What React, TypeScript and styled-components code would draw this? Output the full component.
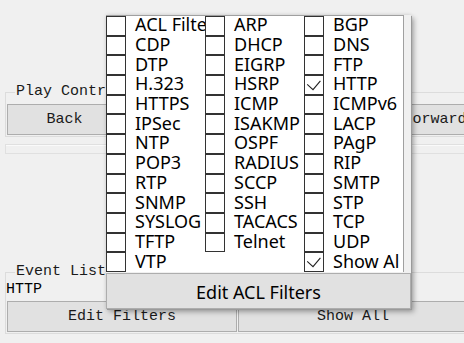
import React from "react";
import styled, { createGlobalStyle } from "styled-components";

const GlobalStyle = createGlobalStyle`
  html, body {
    margin: 0;
    padding: 0;
    background: #f0f0f0;
    overflow: hidden;
  }
  body {
    width: 464px;
    height: 343px;
  }
`;

const columns: { name: string; checked?: boolean }[][] = [
  [
    { name: "ACL Filter" },
    { name: "CDP" },
    { name: "DTP" },
    { name: "H.323" },
    { name: "HTTPS" },
    { name: "IPSec" },
    { name: "NTP" },
    { name: "POP3" },
    { name: "RTP" },
    { name: "SNMP" },
    { name: "SYSLOG" },
    { name: "TFTP" },
    { name: "VTP" },
  ],
  [
    { name: "ARP" },
    { name: "DHCP" },
    { name: "EIGRP" },
    { name: "HSRP" },
    { name: "ICMP" },
    { name: "ISAKMP" },
    { name: "OSPF" },
    { name: "RADIUS" },
    { name: "SCCP" },
    { name: "SSH" },
    { name: "TACACS" },
    { name: "Telnet" },
  ],
  [
    { name: "BGP" },
    { name: "DNS" },
    { name: "FTP" },
    { name: "HTTP", checked: true },
    { name: "ICMPv6" },
    { name: "LACP" },
    { name: "PAgP" },
    { name: "RIP" },
    { name: "SMTP" },
    { name: "STP" },
    { name: "TCP" },
    { name: "UDP" },
    { name: "Show All", checked: true },
  ],
];

export default function App() {
  return (
    <Window>
      <GlobalStyle />
      <Group $top={0} $pad={4}>
        <Caption>Play Controls</Caption>
        <ButtonRow>
          <TkButton $w={115}>Back</TkButton>
          <TkButton $w={115}>Play</TkButton>
          <TkButton $w={115}>Pause</TkButton>
          <TkButton $w={160}>Forward</TkButton>
        </ButtonRow>
      </Group>
      <Separator />
      <Group $top={110} $pad={1}>
        <Caption>Event List</Caption>
        <FilterText>HTTP</FilterText>
        <ButtonRow>
          <TkButton $w={230}>Edit Filters</TkButton>
          <TkButton $w={230}>Show All</TkButton>
        </ButtonRow>
      </Group>

      <Popup>
        <FilterList>
          {columns.map((col, i) => (
            <FilterColumn key={i}>
              {col.map((item) => (
                <FilterRow key={item.name}>
                  <CheckBox>
                    {item.checked && (
                      <svg width="18" height="18" viewBox="0 0 18 18">
                        <polyline
                          points="2.2,8.4 8,13.6 15.4,4.8"
                          fill="none"
                          stroke="#222"
                          strokeWidth="1.1"
                        />
                      </svg>
                    )}
                  </CheckBox>
                  <FilterName>{item.name}</FilterName>
                </FilterRow>
              ))}
            </FilterColumn>
          ))}
        </FilterList>
        <PopupButton>Edit ACL Filters</PopupButton>
      </Popup>
    </Window>
  );
}

const Window = styled.div`
  position: relative;
  width: 474px;
  height: 343px;
  padding-top: 84px;
  box-sizing: border-box;
  font-family: "Liberation Mono", "Courier New", monospace;
  font-size: 15px;
  color: #000;
`;

const Group = styled.fieldset<{ $top: number; $pad: number }>`
  margin: ${({ $top }) => $top}px 0 0 5px;
  padding: ${({ $pad }) => $pad}px 0 1px 1px;
  border: 1px solid #dcdcdc;
  min-width: 0;
`;

const Caption = styled.legend`
  margin-left: 8px;
  padding: 0 1px;
  line-height: 16px;
  color: #1a1a1a;
`;

const ButtonRow = styled.div`
  display: flex;
  gap: 1px;
`;

const TkButton = styled.button<{ $w: number }>`
  width: ${({ $w }) => $w}px;
  height: 31px;
  flex-shrink: 0;
  box-sizing: border-box;
  margin: 0;
  padding: 0;
  border: 1px solid #adadad;
  background: #e1e1e1;
  font-family: "Liberation Mono", "Courier New", monospace;
  font-size: 15px;
  color: #1a1a1a;
`;

const Separator = styled.div`
  margin: 7px 0 0 5px;
  height: 8px;
  border-top: 1px solid #e0e0e0;
  border-bottom: 1px solid #e0e0e0;
  border-left: 1px solid #e0e0e0;
  box-shadow: inset 0 1px 0 #fafafa;
`;

const FilterText = styled.div`
  height: 18px;
  line-height: 18px;
  margin-bottom: 2px;
  margin-left: -1px;
`;

const Popup = styled.div`
  position: absolute;
  left: 106px;
  top: 15px;
  width: 305px;
  height: 294px;
  background: #f0f0f0;
  box-shadow: 1px 1px 0 #9a9a9a, 3px 3px 5px rgba(0, 0, 0, 0.3),
    0 0 4px rgba(0, 0, 0, 0.12);
  font-family: "Noto Sans", "Open Sans", sans-serif;
  font-size: 18px;
  color: #000;
`;

const FilterList = styled.div`
  display: grid;
  grid-template-columns: 99px 99px 96px;
  width: 298px;
  height: 257px;
  box-sizing: border-box;
  background: #fff;
  border-top: 1px solid #a0a0a0;
  border-right: 1px solid #a0a0a0;
`;

const FilterColumn = styled.div`
  display: flex;
  flex-direction: column;
  min-width: 0;
`;

const FilterRow = styled.div`
  display: flex;
  align-items: center;
  height: 19.7px;
  overflow: hidden;
  white-space: nowrap;
`;

const CheckBox = styled.div`
  width: 20px;
  height: 100%;
  flex-shrink: 0;
  box-sizing: border-box;
  border: 1px solid #333;
  display: flex;
  align-items: center;
  justify-content: center;
`;

const FilterName = styled.span`
  margin-left: 9px;
  margin-bottom: 3px;
  line-height: 1;
`;

const PopupButton = styled.div`
  margin-top: 1px;
  height: 36px;
  box-sizing: border-box;
  border: 1px solid #adadad;
  background: #e1e1e1;
  display: flex;
  align-items: center;
  justify-content: center;
  padding-top: 2px;
`;
